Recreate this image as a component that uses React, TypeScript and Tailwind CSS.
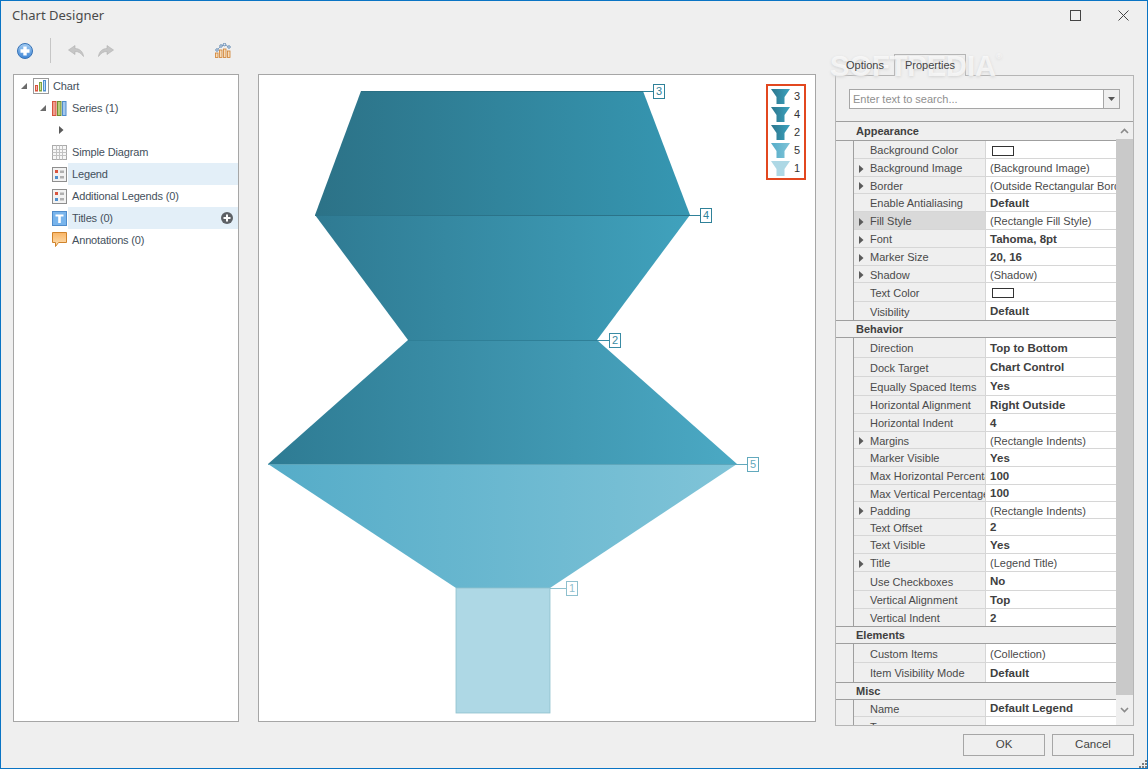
import { Fragment } from "react";

type Row = { name: string; value?: string; bold?: boolean; arrow?: boolean; swatch?: boolean; active?: boolean; h: string };
type Group = { title: string; h: string; rows: Row[] };

const groups: Group[] = [
  {
    title: "Appearance",
    h: "h-[19px]",
    rows: [
      { name: "Background Color", swatch: true, h: "h-[18px]" },
      { name: "Background Image", value: "(Background Image)", arrow: true, h: "h-[18px]" },
      { name: "Border", value: "(Outside Rectangular Border)", arrow: true, h: "h-[17px]" },
      { name: "Enable Antialiasing", value: "Default", bold: true, h: "h-[18px]" },
      { name: "Fill Style", value: "(Rectangle Fill Style)", arrow: true, active: true, h: "h-[18px]" },
      { name: "Font", value: "Tahoma, 8pt", bold: true, arrow: true, h: "h-[18px]" },
      { name: "Marker Size", value: "20, 16", bold: true, arrow: true, h: "h-[18px]" },
      { name: "Shadow", value: "(Shadow)", arrow: true, h: "h-[17px]" },
      { name: "Text Color", swatch: true, h: "h-[19px]" },
      { name: "Visibility", value: "Default", bold: true, h: "h-[18px]" },
    ],
  },
  {
    title: "Behavior",
    h: "h-[18px]",
    rows: [
      { name: "Direction", value: "Top to Bottom", bold: true, h: "h-[20px]" },
      { name: "Dock Target", value: "Chart Control", bold: true, h: "h-[19px]" },
      { name: "Equally Spaced Items", value: "Yes", bold: true, h: "h-[19px]" },
      { name: "Horizontal Alignment", value: "Right Outside", bold: true, h: "h-[18px]" },
      { name: "Horizontal Indent", value: "4", bold: true, h: "h-[18px]" },
      { name: "Margins", value: "(Rectangle Indents)", arrow: true, h: "h-[17px]" },
      { name: "Marker Visible", value: "Yes", bold: true, h: "h-[18px]" },
      { name: "Max Horizontal Percentage", value: "100", bold: true, h: "h-[18px]" },
      { name: "Max Vertical Percentage", value: "100", bold: true, h: "h-[17px]" },
      { name: "Padding", value: "(Rectangle Indents)", arrow: true, h: "h-[17px]" },
      { name: "Text Offset", value: "2", bold: true, h: "h-[17px]" },
      { name: "Text Visible", value: "Yes", bold: true, h: "h-[18px]" },
      { name: "Title", value: "(Legend Title)", arrow: true, h: "h-[18px]" },
      { name: "Use Checkboxes", value: "No", bold: true, h: "h-[19px]" },
      { name: "Vertical Alignment", value: "Top", bold: true, h: "h-[18px]" },
      { name: "Vertical Indent", value: "2", bold: true, h: "h-[17px]" },
    ],
  },
  {
    title: "Elements",
    h: "h-[18px]",
    rows: [
      { name: "Custom Items", value: "(Collection)", h: "h-[19px]" },
      { name: "Item Visibility Mode", value: "Default", bold: true, h: "h-[19px]" },
    ],
  },
  {
    title: "Misc",
    h: "h-[18px]",
    rows: [
      { name: "Name", value: "Default Legend", bold: true, h: "h-[17px]" },
      { name: "Tag", value: "", h: "h-[18px]" },
    ],
  },
];

function Triangle({ open }: { open?: boolean }) {
  return (
    <svg width="8" height="8" viewBox="0 0 8 8" className="shrink-0">
      {open ? <path d="M1 7L7 7L7 1Z" fill="#6b6b6b" /> : <path d="M2 0L6.5 4L2 8Z" fill="#5a5a5a" />}
    </svg>
  );
}

function ChartIcon() {
  return (
    <svg width="16" height="16" viewBox="0 0 16 16" className="shrink-0">
      <rect x="0.5" y="0.5" width="15" height="15" fill="#fff" stroke="#9a9a9a" />
      <rect x="2.5" y="7.5" width="2" height="5.5" fill="#f3b4a6" stroke="#d9553f" />
      <rect x="6.5" y="4.5" width="2" height="8.5" fill="#cfe0a8" stroke="#7da33f" />
      <rect x="10.5" y="2.5" width="2" height="10.5" fill="#bcd8f3" stroke="#4f90cf" />
    </svg>
  );
}

function SeriesIcon() {
  return (
    <svg width="15" height="15" viewBox="0 0 15 15" className="shrink-0">
      <rect x="0.5" y="0.5" width="3.5" height="14" fill="#ef9d8d" stroke="#d5533e" />
      <rect x="5.5" y="0.5" width="3.5" height="14" fill="#b5cd7c" stroke="#6f9030" />
      <rect x="10.5" y="0.5" width="3.5" height="14" fill="#a3c8ee" stroke="#4f8ccb" />
    </svg>
  );
}

function GridIcon() {
  return (
    <svg width="15" height="15" viewBox="0 0 15 15" className="shrink-0">
      <rect x="0.5" y="0.5" width="14" height="14" fill="#f7f7f7" stroke="#ababab" />
      <path d="M4.5 0.5V14.5M7.5 0.5V14.5M10.5 0.5V14.5M0.5 4.5H14.5M0.5 7.5H14.5M0.5 10.5H14.5" stroke="#c2c2c2" fill="none" />
    </svg>
  );
}

function LegendIcon() {
  return (
    <svg width="15" height="15" viewBox="0 0 15 15" className="shrink-0">
      <rect x="0.5" y="0.5" width="14" height="14" fill="#f2f2f2" stroke="#8e8e8e" />
      <rect x="3" y="3" width="3" height="3" fill="#d9553f" />
      <rect x="3" y="9" width="3" height="3" fill="#4f90cf" />
      <rect x="8" y="3.5" width="4" height="2.5" fill="#b0b0b0" />
      <rect x="8" y="9" width="4" height="2.5" fill="#b0b0b0" />
    </svg>
  );
}

function TitleIcon() {
  return (
    <svg width="15" height="15" viewBox="0 0 15 15" className="shrink-0">
      <rect x="0.5" y="0.5" width="14" height="14" fill="#78b4ec" stroke="#4f8ccb" />
      <path d="M3.5 3.5H11.5V5.5H8.8V12H6.2V5.5H3.5Z" fill="#fff" />
    </svg>
  );
}

function NoteIcon() {
  return (
    <svg width="15" height="16" viewBox="0 0 15 16" className="shrink-0">
      <defs>
        <linearGradient id="note" x1="0" x2="0" y1="0" y2="1">
          <stop offset="0" stopColor="#f9b566" />
          <stop offset="1" stopColor="#fde2b8" />
        </linearGradient>
      </defs>
      <path d="M0.5 0.5H14.5V10.5H6.5L3.5 14.5V10.5H0.5Z" fill="url(#note)" stroke="#d0832b" />
    </svg>
  );
}

function TreeRow({
  indent,
  arrow,
  open,
  icon,
  label,
  selected,
  add,
}: {
  indent: string;
  arrow?: boolean;
  open?: boolean;
  icon?: React.ReactNode;
  label?: string;
  selected?: boolean;
  add?: boolean;
}) {
  return (
    <div className={`relative flex h-[22px] items-center ${indent}`}>
      {selected && <div className="absolute top-0 right-0 bottom-0 left-[54px] bg-[#e3eff8]" />}
      {arrow && (
        <div className="relative flex w-[13px] shrink-0 items-center">
          <Triangle open={open} />
        </div>
      )}
      {icon && <div className="relative flex w-[20px] shrink-0 items-center">{icon}</div>}
      {label && <span className="relative text-[#44505c]">{label}</span>}
      {add && (
        <svg width="12" height="12" viewBox="0 0 12 12" className="absolute right-[5px]">
          <circle cx="6" cy="6" r="6" fill="#5d6166" />
          <path d="M6 2.5V9.5M2.5 6H9.5" stroke="#fff" strokeWidth="2" />
        </svg>
      )}
    </div>
  );
}

function Tree() {
  return (
    <div className="h-full w-[226px] shrink-0 border border-[#a6a6a6] bg-white text-[11px] tracking-[-0.15px]">
      <TreeRow indent="pl-[6px]" arrow open icon={<ChartIcon />} label="Chart" />
      <TreeRow indent="pl-[25px]" arrow open icon={<SeriesIcon />} label="Series (1)" />
      <TreeRow indent="pl-[43px]" arrow />
      <TreeRow indent="pl-[38px]" icon={<GridIcon />} label="Simple Diagram" />
      <TreeRow indent="pl-[38px]" icon={<LegendIcon />} label="Legend" selected />
      <TreeRow indent="pl-[38px]" icon={<LegendIcon />} label="Additional Legends (0)" />
      <TreeRow indent="pl-[38px]" icon={<TitleIcon />} label="Titles (0)" selected add />
      <TreeRow indent="pl-[38px]" icon={<NoteIcon />} label="Annotations (0)" />
    </div>
  );
}

function FunnelChart() {
  const labels = [
    { n: "3", lx: 643, x: 653, y: 91, c: "#2f8199" },
    { n: "4", lx: 690, x: 700, y: 215, c: "#2f8199" },
    { n: "2", lx: 597, x: 609, y: 340, c: "#3a8ba4" },
    { n: "5", lx: 737, x: 747, y: 464, c: "#62a9bd" },
    { n: "1", lx: 550, x: 566, y: 588, c: "#8fc0ce" },
  ];
  const legend = [
    { n: "3", fill: "url(#lg1)", y: 89 },
    { n: "4", fill: "url(#lg1)", y: 107 },
    { n: "2", fill: "url(#lg1)", y: 125 },
    { n: "5", fill: "url(#lg2)", y: 143 },
    { n: "1", fill: "#aed8e5", y: 161 },
  ];
  return (
    <svg width="556" height="646" viewBox="259 75 556 646" className="block" fontFamily="'Liberation Sans', sans-serif">
      <defs>
        <linearGradient id="g0" x1="0" x2="1" y1="0" y2="0">
          <stop offset="0" stopColor="#2c7287" />
          <stop offset="1" stopColor="#3697b2" />
        </linearGradient>
        <linearGradient id="g1" x1="0" x2="1" y1="0" y2="0">
          <stop offset="0" stopColor="#2f7a92" />
          <stop offset="1" stopColor="#40a2bd" />
        </linearGradient>
        <linearGradient id="g2" x1="0" x2="1" y1="0" y2="0">
          <stop offset="0" stopColor="#2e7b93" />
          <stop offset="1" stopColor="#4ba9c4" />
        </linearGradient>
        <linearGradient id="g3" x1="0" x2="1" y1="0" y2="0">
          <stop offset="0" stopColor="#55acc8" />
          <stop offset="1" stopColor="#80c4d8" />
        </linearGradient>
        <linearGradient id="lg1" x1="0" x2="1" y1="0" y2="0">
          <stop offset="0" stopColor="#2c758c" />
          <stop offset="1" stopColor="#3ca3bf" />
        </linearGradient>
        <linearGradient id="lg2" x1="0" x2="1" y1="0" y2="0">
          <stop offset="0" stopColor="#55acc8" />
          <stop offset="1" stopColor="#80c4d8" />
        </linearGradient>
      </defs>

      <path d="M361 91H643L690 215H315Z" fill="url(#g0)" />
      <path d="M315 215H690L597 340H408Z" fill="url(#g1)" />
      <path d="M408 340H597L737 464H268Z" fill="url(#g2)" />
      <path d="M268 464H737L550 588H456Z" fill="url(#g3)" />
      <rect x="456" y="588" width="94" height="125" fill="#aed8e5" stroke="#8fc0ce" strokeWidth="0.8" />
      <line x1="361" x2="643" y1="91.5" y2="91.5" stroke="#2a6f84" />
      <line x1="315" x2="690" y1="215.5" y2="215.5" stroke="#2b7389" />
      <line x1="408" x2="597" y1="340.5" y2="340.5" stroke="#2f7f97" />
      <line x1="268" x2="737" y1="464.5" y2="464.5" stroke="#5ea6bb" />

      {labels.map((l) => (
        <Fragment key={l.n}>
          <line x1={l.lx} x2={l.x} y1={l.y + 0.5} y2={l.y + 0.5} stroke={l.c} />
          <rect x={l.x + 0.5} y={l.y - 6.5} width="11" height="14" fill="#fff" stroke={l.c} />
          <text x={l.x + 6} y={l.y + 4} textAnchor="middle" fontSize="11" fill={l.c}>
            {l.n}
          </text>
        </Fragment>
      ))}

      <rect x="767" y="85" width="38" height="94" fill="#fff" stroke="#e2471f" strokeWidth="2" />
      {legend.map((l) => (
        <Fragment key={l.n}>
          <path d={`M771 ${l.y}H790L784.5 ${l.y + 8}V${l.y + 15}H776.5V${l.y + 8}Z`} fill={l.fill} />
          <text x="797" y={l.y + 11} textAnchor="middle" fontSize="11" fill="#333">
            {l.n}
          </text>
        </Fragment>
      ))}
    </svg>
  );
}

function PropertyGrid() {
  return (
    <div className="flex h-[604px] overflow-hidden border-t border-t-[#9f9f9f] text-[11px]">
      <div className="min-w-0 flex-1 overflow-hidden">
        {groups.map((g, i) => (
          <div key={g.title}>
            <div
              className={`flex items-center border-b border-[#9f9f9f] pl-[20px] font-bold text-[#404040] ${g.h} ${i > 0 ? "border-t" : ""}`}
            >
              {g.title}
            </div>
            <div className="ml-[17px] border-l border-[#9f9f9f]">
              {g.rows.map((r) => (
                <div key={r.name} className={`flex border-b border-[#d6d6d6] last:border-b-0 ${r.h}`}>
                  <div
                    className={`flex w-[132px] shrink-0 items-center overflow-hidden border-r border-[#d6d6d6] pt-[2px] whitespace-nowrap text-[#4a4a4a] ${r.active ? "bg-[#d9d9d9]" : ""}`}
                  >
                    <div className="flex w-[16px] shrink-0 justify-end pr-[5px]">{r.arrow && <Triangle />}</div>
                    {r.name}
                  </div>
                  <div
                    className={`flex min-w-0 flex-1 items-center overflow-hidden bg-white pt-[2px] pl-[4px] whitespace-nowrap ${r.bold ? "text-[11.5px] font-bold text-[#404040]" : "text-[#4a4a4a]"}`}
                  >
                    {r.swatch ? <div className="ml-[2px] h-[10px] w-[22px] border border-[#333] bg-white" /> : r.value}
                  </div>
                </div>
              ))}
            </div>
          </div>
        ))}
      </div>
      <div className="flex w-[17px] shrink-0 flex-col bg-[#efefef]">
        <div className="flex h-[17px] shrink-0 items-center justify-center">
          <svg width="9" height="6" viewBox="0 0 9 6">
            <path d="M1 5L4.5 1.5L8 5" fill="none" stroke="#8a8a8a" strokeWidth="1.6" />
          </svg>
        </div>
        <div className="h-[558px] bg-[#c9c9c9]" />
        <div className="flex h-[30px] items-center justify-center">
          <svg width="9" height="6" viewBox="0 0 9 6">
            <path d="M1 1L4.5 4.5L8 1" fill="none" stroke="#8a8a8a" strokeWidth="1.6" />
          </svg>
        </div>
      </div>
    </div>
  );
}

export default function App() {
  return (
    <div
      className="relative flex h-[769px] w-[1148px] flex-col overflow-hidden border border-[#0a74c4] bg-[#efefef] text-[#444]"
      style={{ fontFamily: "'Liberation Sans', sans-serif" }}
    >
      {/* Title bar */}
      <div className="flex h-[29px] shrink-0 items-center justify-between pr-[18px] pl-[11px]">
        <span className="text-[13px] text-[#4a4a4a]" style={{ fontFamily: "'Noto Sans', sans-serif" }}>
          Chart Designer
        </span>
        <div className="flex items-center gap-[37px]">
          <div className="h-[11px] w-[11px] border border-[#444]" />
          <svg width="11" height="11" viewBox="0 0 11 11">
            <path d="M0.5 0.5L10.5 10.5M10.5 0.5L0.5 10.5" stroke="#444" fill="none" />
          </svg>
        </div>
      </div>

      <div className="flex flex-1">
        {/* Toolbar and main panels */}
        <div className="w-[815px] shrink-0 pl-[12px]">
          <div className="flex h-[44px] items-center pb-[3px] pl-[4px]">
            <svg width="16" height="16" viewBox="0 0 16 16">
              <defs>
                <linearGradient id="plus" x1="0" x2="0" y1="0" y2="1">
                  <stop offset="0" stopColor="#a4cdf3" />
                  <stop offset="1" stopColor="#3f86d6" />
                </linearGradient>
              </defs>
              <circle cx="8" cy="8" r="7.5" fill="url(#plus)" stroke="#3772b5" />
              <path d="M8 3.5V12.5M3.5 8H12.5" stroke="#fff" strokeWidth="3.4" />
            </svg>
            <div className="ml-[17px] h-[25px] w-px bg-[#c6c6c6]" />
            <svg width="16" height="12" viewBox="0 0 16 12" className="ml-[17px]">
              <path d="M7 0.5L0.5 5L7 9.5V6.5C10.5 6.5 13 8 15.5 11.5C15 6.5 11.5 3.5 7 3.5Z" fill="#c6c6c6" stroke="#b0b0b0" strokeWidth="0.6" />
            </svg>
            <svg width="16" height="12" viewBox="0 0 16 12" className="ml-[14px]">
              <path d="M9 0.5L15.5 5L9 9.5V6.5C5.5 6.5 3 8 0.5 11.5C1 6.5 4.5 3.5 9 3.5Z" fill="#c6c6c6" stroke="#b0b0b0" strokeWidth="0.6" />
            </svg>
            <svg width="16" height="15" viewBox="0 0 16 15" className="ml-[101px]">
              <path d="M2 7L6 3L9.5 1.5L14 4" fill="none" stroke="#6a8fb8" strokeWidth="0.8" />
              <circle cx="2" cy="7" r="1.3" fill="#dfeaf6" stroke="#3f6d9e" strokeWidth="0.7" />
              <circle cx="6" cy="3" r="1.3" fill="#dfeaf6" stroke="#3f6d9e" strokeWidth="0.7" />
              <circle cx="9.5" cy="1.5" r="1.3" fill="#dfeaf6" stroke="#3f6d9e" strokeWidth="0.7" />
              <circle cx="14" cy="4" r="1.3" fill="#dfeaf6" stroke="#3f6d9e" strokeWidth="0.7" />
              <rect x="0.5" y="10" width="2.5" height="4.5" fill="#f8dcb8" stroke="#cf7f2e" strokeWidth="0.8" />
              <rect x="4.5" y="7" width="2.5" height="7.5" fill="#f8dcb8" stroke="#cf7f2e" strokeWidth="0.8" />
              <rect x="8.5" y="6" width="2.5" height="8.5" fill="#f8dcb8" stroke="#cf7f2e" strokeWidth="0.8" />
              <rect x="12.5" y="8" width="2.5" height="6.5" fill="#f8dcb8" stroke="#cf7f2e" strokeWidth="0.8" />
            </svg>
          </div>
          <div className="flex h-[648px] gap-[19px]">
            <Tree />
            <div className="h-full w-[558px] shrink-0 border border-[#a6a6a6] bg-white">
              <FunnelChart />
            </div>
          </div>
        </div>

        {/* Right side */}
        <div className="ml-[19px] flex w-[299px] shrink-0 flex-col pt-[24px]">
          <div className="flex h-[21px] items-end pl-[11px] text-[11px]">
            <span className="relative z-[6] w-[48px] leading-[20px]">Options</span>
            <div className="relative -mb-px flex h-[22px] w-[72px] items-center justify-center border border-b-0 border-[#b5b5b5] bg-[#efefef]">
              <span className="relative z-[6]">Properties</span>
            </div>
          </div>
          <div className="h-[651px] border border-[#b5b5b5]">
            <div className="px-[13px] pt-[13px] pb-[12px]">
              <div className="flex h-[20px] border border-[#a6a6a6] bg-white text-[11px]">
                <span className="flex-1 pl-[3px] leading-[18px] text-[#8f8f8f]">Enter text to search...</span>
                <div className="flex w-[16px] items-center justify-center border-l border-[#a6a6a6] bg-[#efefef]">
                  <svg width="7" height="4" viewBox="0 0 7 4">
                    <path d="M0 0H7L3.5 4Z" fill="#555" />
                  </svg>
                </div>
              </div>
            </div>
            <PropertyGrid />
          </div>
          <div className="mt-[8px] flex justify-end gap-[7px] text-[11.5px]">
            <div className="flex h-[22px] w-[82px] items-center justify-center border border-[#a6a6a6] bg-[#efefef]">OK</div>
            <div className="flex h-[22px] w-[82px] items-center justify-center border border-[#a6a6a6] bg-[#efefef]">Cancel</div>
          </div>
        </div>
      </div>

      {/* Watermark */}
      <div className="pointer-events-none absolute top-[47px] left-[829px] z-[5] flex items-start font-bold text-white/70 [text-shadow:0_1px_3px_#d2d2d2]">
        <span className="text-[29px] leading-[36px]">SOFTPEDIA</span>
        <span className="mt-[5px] text-[8px] leading-[8px]">®</span>
      </div>

      {/* Resize grip */}
      <svg width="8" height="8" viewBox="0 0 8 8" className="absolute right-0 bottom-0">
        <path d="M6 0H8V2H6ZM3 3H5V5H3ZM6 3H8V5H6ZM0 6H2V8H0ZM3 6H5V8H3ZM6 6H8V8H6Z" fill="#7d7d7d" />
      </svg>
    </div>
  );
}
